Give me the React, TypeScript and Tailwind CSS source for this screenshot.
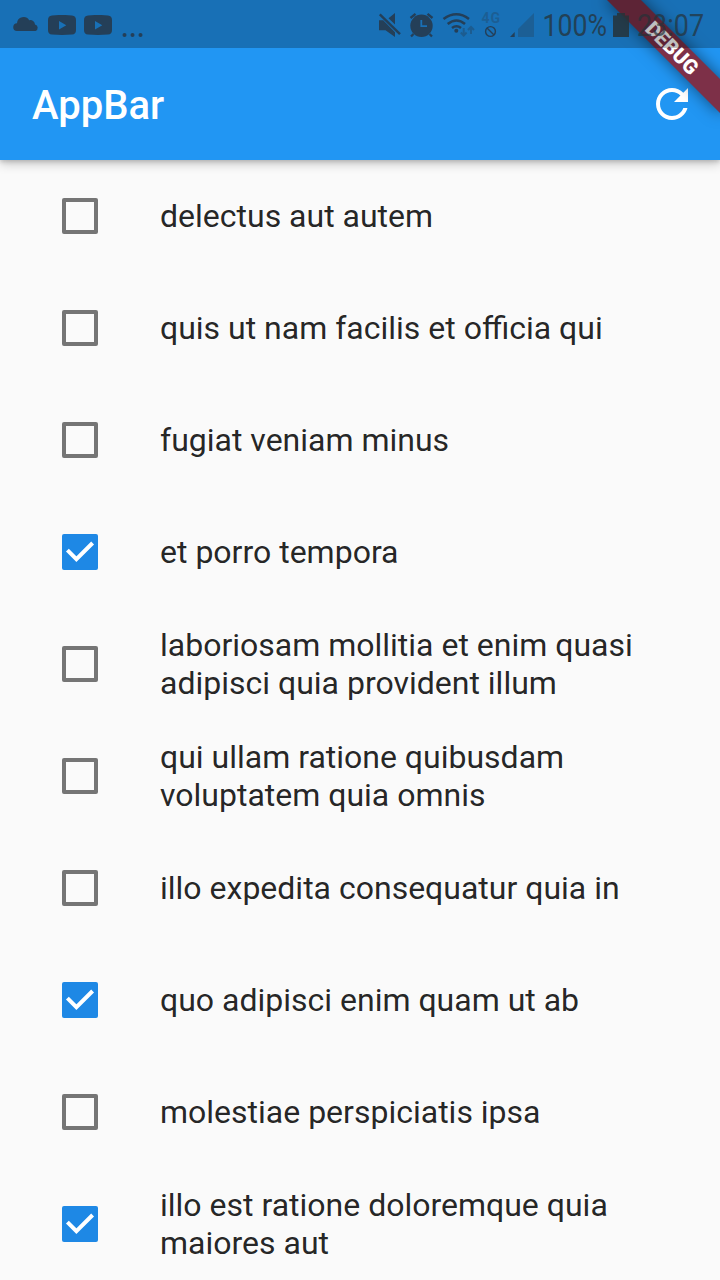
import React from 'react';

type Todo = { title: string; done: boolean };

const todos: Todo[] = [
  { title: 'delectus aut autem', done: false },
  { title: 'quis ut nam facilis et officia qui', done: false },
  { title: 'fugiat veniam minus', done: false },
  { title: 'et porro tempora', done: true },
  { title: 'laboriosam mollitia et enim quasi adipisci quia provident illum', done: false },
  { title: 'qui ullam ratione quibusdam voluptatem quia omnis', done: false },
  { title: 'illo expedita consequatur quia in', done: false },
  { title: 'quo adipisci enim quam ut ab', done: true },
  { title: 'molestiae perspiciatis ipsa', done: false },
  { title: 'illo est ratione doloremque quia maiores aut', done: true },
];

function Video() {
  return (
    <svg className="h-5 w-7 shrink-0" viewBox="0 0 28 20" fill="currentColor">
      <path fillRule="evenodd" d="M4 .4Q14-.5 24 .4Q28 .7 28 5V15Q28 19.3 24 19.6Q14 20.4 4 19.6Q0 19.3 0 15V5Q0 .7 4 .4ZM11 6V14.5L18.3 10.2Z" />
    </svg>
  );
}

function StatusBar() {
  return (
    <div className="absolute inset-x-0 top-0 flex h-12 items-center bg-black/25 text-[#243f58]">
      <svg className="ml-[13px] h-4 w-[26px]" viewBox="0 0 26 16" fill="currentColor">
        <path d="M4 15A4 4 0 0 1 .2 11A4 4 0 0 1 4 7.3A6.6 6.6 0 0 1 16.2 4.3A4.6 4.6 0 0 1 22 8.5A3.4 3.4 0 0 1 22.5 15Z" />
      </svg>
      <div className="mt-0.5 ml-[9px] flex gap-2">
        <Video />
        <Video />
      </div>
      <svg className="ml-[10px] mt-[21px] h-1 w-[21px]" viewBox="0 0 21 4" fill="currentColor">
        <circle cx="2.5" cy="2" r="2" />
        <circle cx="10.5" cy="2" r="2" />
        <circle cx="18.5" cy="2" r="2" />
      </svg>
      <svg className="ml-[234px] h-12 w-[166px] shrink-0" viewBox="377 0 166 48" fill="currentColor">
        <path d="M379 20.3H383.2L395 32.2V37L385.5 30.3H379ZM388.5 18.3L395 13V24.6Z" />
        <path d="M379.8 14.3L400 34.2" fill="none" stroke="currentColor" strokeWidth="2.4" />
        <circle cx="421.5" cy="25.8" r="11.2" />
        <path d="M410.5 18L415.5 13.8M432.5 18L427.5 13.8M413.5 34L411 36.5M429.5 34L432 36.5" fill="none" stroke="currentColor" strokeWidth="2.3" />
        <path d="M421.3 20V26.2H427" fill="none" stroke="#1970b6" strokeWidth="1.8" />
        <path d="M443.5 19Q456.5 9.5 469 19M447.7 24Q456.5 17 465 24M452 28Q456.5 24.5 461 28" fill="none" stroke="currentColor" strokeWidth="2.6" />
        <circle cx="456.3" cy="30.8" r="2" />
        <g opacity=".4" fill="none" stroke="currentColor" strokeWidth="2">
          <path d="M463.7 28V35.5M460.8 32.5L463.7 35.5L466.6 32.5M471 34V27M468 30L471 27L474 30" />
        </g>
        <text x="481.5" y="23" className="font-[Roboto] text-[14px] font-bold" textLength="18.5" opacity=".35">4G</text>
        <circle cx="490.5" cy="31.5" r="4.9" fill="none" stroke="currentColor" strokeWidth="1.4" />
        <path d="M487 28L494 35" stroke="currentColor" strokeWidth="1.4" />
        <path d="M510 37H514.7V32Z" />
        <path d="M518 37V29L534 13V37Z" opacity=".35" />
      </svg>
      <svg className="h-12 w-[177px] shrink-0 text-[#263238]" viewBox="543 0 177 48" fill="currentColor">
        <text x="542.5" y="36" className="font-[Roboto] text-[31px]" opacity=".75" textLength="64.5" lengthAdjust="spacingAndGlyphs">100%</text>
        <path d="M613 15.5H617V13H625V15.5H629V37H613Z" opacity=".85" />
        <text x="637" y="36" className="font-[Roboto] text-[31px]" opacity=".7" textLength="67" lengthAdjust="spacingAndGlyphs">23:07</text>
      </svg>
    </div>
  );
}

function DebugBanner() {
  return (
    <div className="absolute left-[592px] top-9 flex h-6 w-40 rotate-45 items-center justify-center bg-[#7d3048] text-[20.4px] leading-6 font-black text-white shadow-[0_0_16px_rgba(0,0,0,0.5)]">
      DEBUG
    </div>
  );
}

function Checkbox({ checked }: { checked: boolean }) {
  if (!checked) {
    return <span className="size-9 shrink-0 rounded-[2px] border-4 border-[#757575]" />;
  }
  return (
    <span className="size-9 shrink-0 rounded-[2px] bg-[#1e88e5]">
      <svg viewBox="0 0 36 36" fill="none" stroke="white" strokeWidth="4">
        <path d="M5.4 16.2L14.4 25.2L30.6 9" />
      </svg>
    </span>
  );
}

export default function App() {
  return (
    <div className="relative h-[1280px] w-[720px] overflow-hidden bg-[#fafafa] font-[Roboto,sans-serif]">
      <header className="relative flex h-40 items-center justify-between bg-[#2196f3] pt-12 pr-6 pl-8 text-white shadow-[0_4px_10px_rgba(0,0,0,0.2),0_2px_4px_rgba(0,0,0,0.14)]">
        <h1 className="pt-[3px] text-[40px] leading-[48px] font-medium">AppBar</h1>
        <svg className="size-12" viewBox="0 0 24 24" fill="currentColor">
          <path d="M17.65 6.35C16.2 4.9 14.21 4 12 4c-4.42 0-7.99 3.58-7.99 8s3.57 8 7.99 8c3.73 0 6.84-2.55 7.73-6h-2.08c-.82 2.33-3.04 4-5.65 4-3.31 0-6-2.69-6-6s2.69-6 6-6c1.66 0 3.14.69 4.22 1.78L13 11h7V4l-2.35 2.35z" />
        </svg>
      </header>
      <ul>
        {todos.map((todo) => (
          <li key={todo.title} className="flex h-28 items-center gap-[62px] pl-[62px]">
            <Checkbox checked={todo.done} />
            <span className="w-[496px] text-[32px] leading-[38px] text-black/87">{todo.title}</span>
          </li>
        ))}
      </ul>
      <DebugBanner />
      <StatusBar />
    </div>
  );
}
